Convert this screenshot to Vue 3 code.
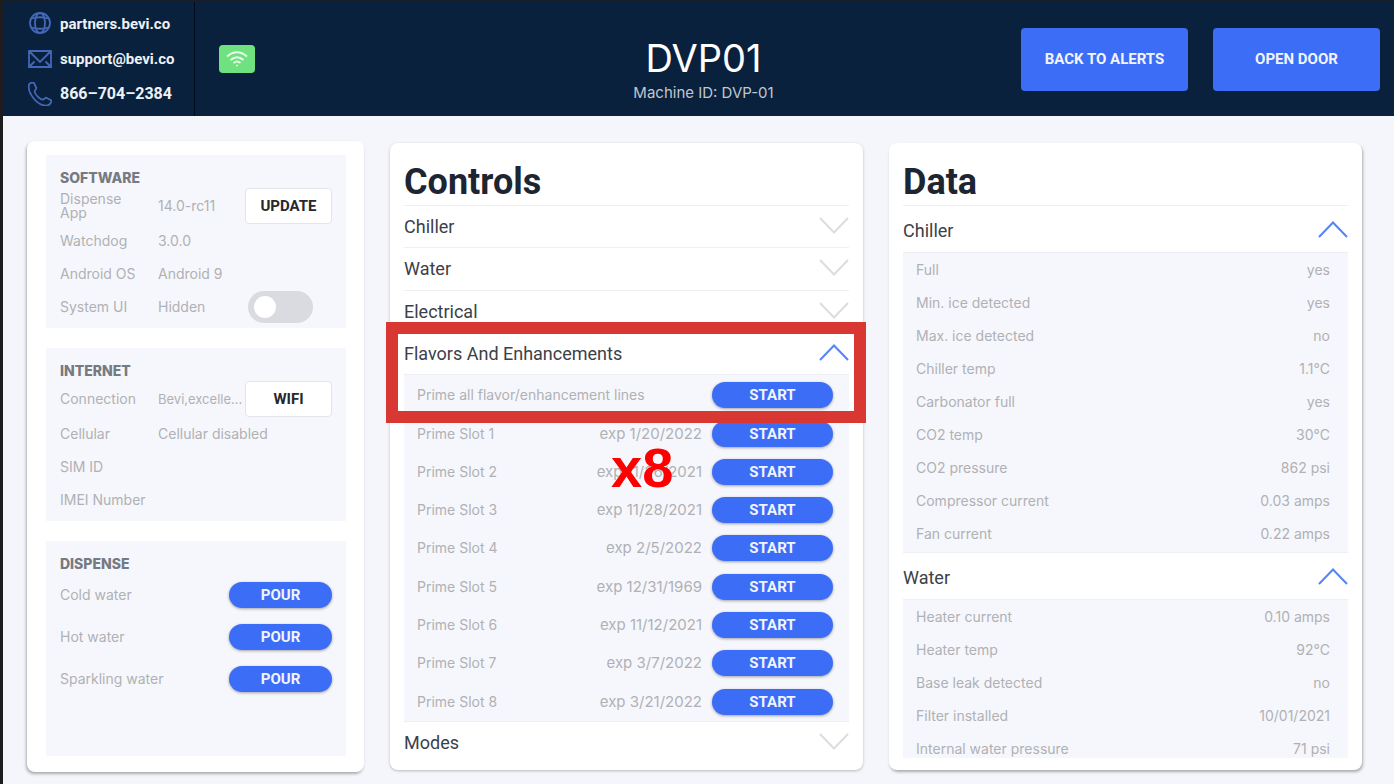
<template>
  <div class="dashboard">
    <header class="topbar">
      <div class="topbar-left">
        <address class="contact">
          <a href="https://partners.bevi.co" class="contact-link">
            <svg class="contact-icon" viewBox="0 0 24 24">
              <circle cx="12" cy="11" r="10" />
              <ellipse cx="12" cy="11" rx="5" ry="10" />
              <path d="M3.5 6.5Q12 4 20.5 6.5M3.5 15.5Q12 18 20.5 15.5" />
            </svg>
            partners.bevi.co
          </a>
          <a href="mailto:support@bevi.co" class="contact-link">
            <svg class="contact-icon" viewBox="0 0 24 24">
              <path d="M1 4H23V20H1ZM1 4L12 15L23 4M1 20L6.5 14.5M23 20L17.5 14.5" />
            </svg>
            support@bevi.co
          </a>
          <a href="tel:8667042384" class="contact-link phone">
            <svg class="contact-icon" viewBox="0 0 24 24">
              <path d="M1 2.5C2.5 0.5 5 0 6 1L8.3 5.8C8.7 7 6.5 8.2 6.6 9.5C7 12.5 11.8 17.2 14.8 17.6C16 17.8 17.2 15.4 18.3 15.8L23 18.2C24 19.5 22 23 19 23.5C10 24.5 -1 11.5 1 2.5Z" />
            </svg>
            866–704–2384
          </a>
        </address>
        <div class="wifi-badge" role="img" aria-label="Wi-Fi connected">
          <svg viewBox="0 0 24 18" width="24" height="18">
            <path d="M2 6.5Q12 -2 22 6.5M5.5 10Q12 4.5 18.5 10M8.5 13Q12 10 15.5 13" />
            <circle cx="12" cy="15.5" r="1" />
          </svg>
        </div>
      </div>
      <div class="machine">
        <h1 class="machine-name">DVP01</h1>
        <p class="machine-id">Machine ID: DVP-01</p>
      </div>
      <div class="topbar-actions">
        <button type="button" class="btn-main">BACK TO ALERTS</button>
        <button type="button" class="btn-main">OPEN DOOR</button>
      </div>
    </header>

    <main class="columns">
      <div class="card status">
        <section class="box">
          <h2 class="box-title">SOFTWARE</h2>
          <div class="info-row first">
            <span class="info-label">Dispense App</span>
            <span class="info-value">14.0-rc11</span>
            <button type="button" class="btn-outline">UPDATE</button>
          </div>
          <div class="info-row">
            <span class="info-label">Watchdog</span>
            <span class="info-value">3.0.0</span>
          </div>
          <div class="info-row">
            <span class="info-label">Android OS</span>
            <span class="info-value">Android 9</span>
          </div>
          <div class="info-row">
            <label class="info-label" for="system-ui">System UI</label>
            <span class="info-value">{{ systemUi ? 'Visible' : 'Hidden' }}</span>
            <span class="toggle-cell">
              <input id="system-ui" v-model="systemUi" type="checkbox" class="toggle" />
            </span>
          </div>
        </section>

        <section class="box">
          <h2 class="box-title">INTERNET</h2>
          <div class="info-row first">
            <span class="info-label">Connection</span>
            <span class="info-value network">Bevi,excelle...</span>
            <button type="button" class="btn-outline">WIFI</button>
          </div>
          <div class="info-row">
            <span class="info-label">Cellular</span>
            <span class="info-value">Cellular disabled</span>
          </div>
          <div class="info-row">
            <span class="info-label">SIM ID</span>
          </div>
          <div class="info-row">
            <span class="info-label">IMEI Number</span>
          </div>
        </section>

        <section class="box box-fill">
          <h2 class="box-title">DISPENSE</h2>
          <div v-for="drink in drinks" :key="drink" class="pour-row">
            <span>{{ drink }}</span>
            <button type="button" class="btn-pill pour">POUR</button>
          </div>
        </section>
      </div>

      <section class="card controls">
        <h2 class="card-title">Controls</h2>
        <div
          v-for="group in controls"
          :key="group.name"
          class="group"
          :class="{ open: group.open }"
        >
          <h3 class="group-head">
            <button type="button" class="group-toggle" :aria-expanded="group.open" @click="group.open = !group.open">
              {{ group.name }}
              <svg class="chevron" viewBox="0 0 30 19">
                <path :d="group.open ? 'M1 16L15 1.5L29 16' : 'M1 1L15 15.5L29 1'" />
              </svg>
            </button>
          </h3>
          <ul v-if="group.open" class="group-panel">
            <li v-for="line in group.lines" :key="line.name" class="prime-row">
              <span class="prime-name">{{ line.name }}</span>
              <span v-if="line.exp" class="prime-exp">exp {{ line.exp }}</span>
              <button type="button" class="btn-pill start">START</button>
            </li>
          </ul>
          <template v-if="group.open && group.note">
            <div class="marker"></div>
            <strong class="marker-note">{{ group.note }}</strong>
          </template>
        </div>
      </section>

      <section class="card data">
        <h2 class="card-title">Data</h2>
        <div class="data-scroll">
          <div v-for="group in readings" :key="group.name" class="data-group">
            <h3 class="group-head">
              <button type="button" class="group-toggle" :aria-expanded="group.open" @click="group.open = !group.open">
                {{ group.name }}
                <svg class="chevron" viewBox="0 0 30 19">
                  <path :d="group.open ? 'M1 16L15 1.5L29 16' : 'M1 1L15 15.5L29 1'" />
                </svg>
              </button>
            </h3>
            <dl v-if="group.open" class="data-panel">
              <div v-for="[label, value] in group.rows" :key="label" class="data-row">
                <dt>{{ label }}</dt>
                <dd>{{ value }}</dd>
              </div>
            </dl>
          </div>
        </div>
      </section>
    </main>
  </div>
</template>

<script setup>
import { ref } from 'vue';

const systemUi = ref(false);

const drinks = ['Cold water', 'Hot water', 'Sparkling water'];

const controls = ref([
  { name: 'Chiller', open: false, lines: [] },
  { name: 'Water', open: false, lines: [] },
  { name: 'Electrical', open: false, lines: [] },
  {
    name: 'Flavors And Enhancements',
    open: true,
    note: 'x8',
    lines: [
      { name: 'Prime all flavor/enhancement lines' },
      { name: 'Prime Slot 1', exp: '1/20/2022' },
      { name: 'Prime Slot 2', exp: '11/26/2021' },
      { name: 'Prime Slot 3', exp: '11/28/2021' },
      { name: 'Prime Slot 4', exp: '2/5/2022' },
      { name: 'Prime Slot 5', exp: '12/31/1969' },
      { name: 'Prime Slot 6', exp: '11/12/2021' },
      { name: 'Prime Slot 7', exp: '3/7/2022' },
      { name: 'Prime Slot 8', exp: '3/21/2022' }
    ]
  },
  { name: 'Modes', open: false, lines: [] }
]);

const readings = ref([
  {
    name: 'Chiller',
    open: true,
    rows: [
      ['Full', 'yes'],
      ['Min. ice detected', 'yes'],
      ['Max. ice detected', 'no'],
      ['Chiller temp', '1.1°C'],
      ['Carbonator full', 'yes'],
      ['CO2 temp', '30°C'],
      ['CO2 pressure', '862 psi'],
      ['Compressor current', '0.03 amps'],
      ['Fan current', '0.22 amps']
    ]
  },
  {
    name: 'Water',
    open: true,
    rows: [
      ['Heater current', '0.10 amps'],
      ['Heater temp', '92°C'],
      ['Base leak detected', 'no'],
      ['Filter installed', '10/01/2021'],
      ['Internal water pressure', '71 psi']
    ]
  }
]);
</script>

<style>
body {
  margin: 0;
  background: #f5f6fb;
}
</style>

<style scoped>
* {
  box-sizing: border-box;
}

h1, h2, h3, p, ul, dl, dd {
  margin: 0;
  padding: 0;
}

button {
  border: 0;
  padding: 0;
  cursor: pointer;
  font-family: Roboto, sans-serif;
}

.dashboard {
  display: flex;
  flex-direction: column;
  height: 100vh;
  min-height: 784px;
  border-left: 3px solid #1d1d1f;
  background: #f5f6fb;
  color: #b0b1b4;
  font: 14px/20px Inter, sans-serif;
}

/* top bar */
.topbar {
  display: grid;
  grid-template-columns: 1fr auto 1fr;
  flex: none;
  height: 116px;
  border-top: 2px solid #171e28;
  background: #09213d;
}

.topbar-left {
  display: flex;
  align-items: center;
  gap: 24px;
}

.contact {
  display: flex;
  flex-direction: column;
  justify-content: center;
  align-self: stretch;
  width: 192px;
  padding-left: 25px;
  border-right: 1px solid #010a16;
  font-style: normal;
}

.contact-link {
  display: flex;
  align-items: center;
  gap: 8px;
  height: 35px;
  color: #eef1f6;
  font: 700 15px/20px Roboto, sans-serif;
  text-decoration: none;
}

.contact-link.phone {
  font-size: 16px;
}

.contact-icon {
  width: 24px;
  height: 24px;
  fill: none;
  stroke: #4467b8;
  stroke-width: 1.8;
}

.wifi-badge {
  display: flex;
  align-items: center;
  justify-content: center;
  width: 36px;
  height: 28px;
  border-radius: 4px;
  background: #70e17f;
}

.wifi-badge path {
  fill: none;
  stroke: #e9fbec;
  stroke-width: 1.8;
}

.wifi-badge circle {
  fill: #e9fbec;
}

.machine {
  padding: 32px 0 0 10px;
  text-align: center;
}

.machine-name {
  color: #fff;
  font-size: 38px;
  font-weight: 400;
  line-height: 48px;
}

.machine-id {
  color: #c0c7d0;
  font-size: 15px;
  line-height: 22px;
}

.topbar-actions {
  display: flex;
  align-items: center;
  justify-content: flex-end;
  gap: 25px;
  padding-right: 14px;
}

.btn-main {
  width: 167px;
  height: 63px;
  border-radius: 4px;
  background: #3b6df6;
  color: #f1f4ff;
  font-size: 15px;
  font-weight: 700;
}

/* columns */
.columns {
  display: grid;
  grid-template-columns: minmax(0, 337fr) minmax(0, 473fr) minmax(0, 473fr);
  grid-template-rows: minmax(0, 1fr);
  gap: 26px;
  flex: 1;
  min-height: 0;
  padding: 25px 32px 12px 24px;
}

.card {
  display: flex;
  flex-direction: column;
  min-height: 0;
  border-radius: 8px;
  background: #fff;
  box-shadow: 0 1px 3px rgba(0, 0, 0, 0.25);
}

.status {
  gap: 20px;
  padding: 14px 18px 16px 19px;
  box-shadow: -1px 2px 3px rgba(0, 0, 0, 0.3);
}

.controls,
.data {
  margin: 2px 0;
  padding: 14px 14px 12px;
}

.controls {
  padding-bottom: 7px;
}

.data {
  box-shadow: 1px 2px 3px rgba(0, 0, 0, 0.3);
}

/* status boxes */
.box {
  padding: 14px 14px 5px;
  background: #f6f7fc;
}

.box-fill {
  flex: 1;
}

.box-title {
  margin-bottom: 1px;
  color: #777a80;
  font-size: 14px;
  font-weight: 800;
  line-height: 18px;
}

.info-row {
  display: flex;
  align-items: center;
  height: 33px;
  white-space: nowrap;
}

.info-row.first {
  height: 36px;
}

.info-label {
  flex: none;
  width: 98px;
  padding-right: 12px;
  line-height: 14px;
  white-space: normal;
}

.info-value {
  flex: 1;
  min-width: 0;
}

.info-value.network {
  font-size: 13px;
}

.btn-outline {
  flex: none;
  width: 87px;
  height: 36px;
  border: 1px solid #e4e5ea;
  border-radius: 4px;
  background: #fff;
  color: #26282c;
  font-size: 15px;
  font-weight: 700;
}

.toggle-cell {
  display: flex;
  width: 84px;
}

.toggle {
  appearance: none;
  width: 65px;
  height: 32px;
  margin: 0;
  padding: 5px 6px;
  border-radius: 16px;
  background: #dadbe0;
  cursor: pointer;
}

.toggle::before {
  content: '';
  display: block;
  width: 22px;
  height: 22px;
  border-radius: 50%;
  background: #fff;
}

.toggle:checked {
  background: #3b6df6;
}

.toggle:checked::before {
  margin-left: auto;
}

.pour-row {
  display: flex;
  align-items: center;
  justify-content: space-between;
  height: 42px;
}

.btn-pill {
  flex: none;
  height: 26px;
  border-radius: 13px;
  background: #3b6df6;
  box-shadow: 0 1px 3px rgba(0, 0, 0, 0.35);
  color: #f1f4ff;
  font-size: 15px;
  font-weight: 700;
}

.pour {
  width: 103px;
}

.start {
  width: 121px;
}

/* accordions */
.card-title {
  flex: none;
  color: #1d2532;
  font: 700 36px/50px Roboto, sans-serif;
  height: 48px;
}

.group {
  position: relative;
  display: flex;
  flex-direction: column;
  flex: 1 1 auto;
}

.group.open {
  flex-grow: 10;
}

.group-head {
  flex: 1 1 42px;
  border-top: 1px solid #efeff3;
}

.group-toggle {
  display: flex;
  align-items: center;
  justify-content: space-between;
  width: 100%;
  height: 100%;
  background: none;
  color: #3c4049;
  font-size: 18px;
}

.chevron {
  width: 30px;
  height: 19px;
  fill: none;
  stroke: #dcdde0;
  stroke-width: 2;
}

[aria-expanded='true'] .chevron {
  stroke: #5584f8;
}

.group-panel {
  display: flex;
  flex-direction: column;
  flex: 9 1 auto;
  padding-top: 1px;
  border-top: 1px solid #efeff3;
  background: #f6f7fc;
  list-style: none;
}

.prime-row {
  display: flex;
  align-items: center;
  gap: 10px;
  flex: 1 1 38px;
  padding: 0 16px 0 13px;
}

.prime-name {
  flex: 1;
}

.prime-exp {
  font-size: 15px;
}

/* callout over the first line of the open group */
.marker {
  position: absolute;
  top: -10px;
  left: -18px;
  right: -17px;
  height: 101px;
  border: 12px solid #d93731;
  pointer-events: none;
}

.marker-note {
  position: absolute;
  top: 104px;
  left: 207px;
  color: #f00;
  font: 700 56px/64px "Liberation Sans", Arial, sans-serif;
  pointer-events: none;
}

/* data */
.data-scroll {
  flex: 1;
  min-height: 0;
  overflow-y: auto;
  scrollbar-width: none;
}

.data .group-head {
  height: 47px;
}

.data .group-toggle {
  padding-top: 3px;
}

.data-panel {
  padding-bottom: 2px;
  border-top: 1px solid #efeff3;
  background: #f6f7fc;
}

.data-row {
  display: flex;
  align-items: center;
  justify-content: space-between;
  height: 33px;
  padding: 0 18px 0 13px;
}
</style>
